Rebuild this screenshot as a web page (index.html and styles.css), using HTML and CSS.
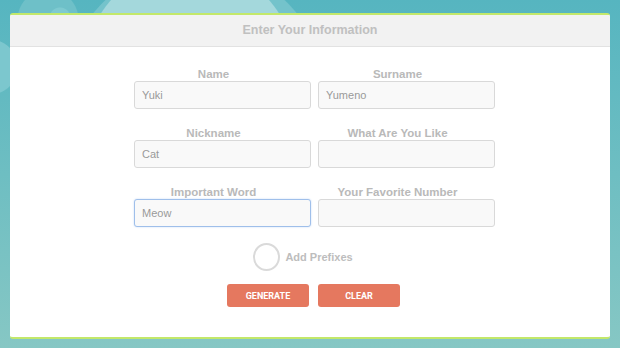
FILE: index.html
```html
<!DOCTYPE html>
<html>
<head>
<meta charset="utf-8">
<link rel="stylesheet" href="styles.css">
</head>
<body>
<div class="card">
  <div class="card-head">Enter Your Information</div>
  <div class="card-body">
    <div class="grid">
      <div class="field"><label class="lbl">Name</label><input class="inp" type="text" value="Yuki"></div>
      <div class="field"><label class="lbl">Surname</label><input class="inp" type="text" value="Yumeno"></div>
      <div class="field"><label class="lbl">Nickname</label><input class="inp" type="text" value="Cat"></div>
      <div class="field"><label class="lbl">What Are You Like</label><input class="inp" type="text" value=""></div>
      <div class="field"><label class="lbl">Important Word</label><input class="inp inp-focus" type="text" value="Meow" autofocus></div>
      <div class="field"><label class="lbl">Your Favorite Number</label><input class="inp" type="text" value=""></div>
    </div>
    <div class="check-row">
      <span class="circle"></span>
      <span class="check-text">Add Prefixes</span>
    </div>
    <div class="btn-row">
      <button class="btn">Generate</button>
      <button class="btn">Clear</button>
    </div>
  </div>
</div>
</body>
</html>
```
FILE: styles.css
```css
html, body {
  margin: 0;
  padding: 0;
}
body {
  width: 620px;
  height: 348px;
  overflow: hidden;
  font-family: "Liberation Sans", Arial, sans-serif;
  background:
    radial-gradient(circle at 190px 70px, #a4d8dc 0 105px, transparent 106px),
    radial-gradient(circle at 120px 95px, #a4d8dc 0 80px, transparent 81px),
    radial-gradient(circle at 195px 95px, #74c3cb 0 130px, transparent 131px),
    radial-gradient(circle at 60px 18px, #7ecad0 0 10px, transparent 11px),
    radial-gradient(circle at 48px 20px, #6ec0c8 0 30px, transparent 31px),
    radial-gradient(circle at -10px 67px, #7cc7ce 0 27px, transparent 28px),
    linear-gradient(#56b5c0, #86c7c4);
  padding-top: 13px;
  box-sizing: border-box;
}
.card {
  margin: 0 10px;
  width: 600px;
  background: #fff;
  border-top: 2px solid #c3e86a;
  border-bottom: 2px solid #c3e86a;
  border-radius: 3px;
  overflow: hidden;
}
.card-head {
  height: 31px;
  line-height: 31px;
  background: #f2f2f2;
  border-bottom: 1px solid #e2e2e2;
  text-align: center;
  font-size: 12.5px;
  font-weight: bold;
  color: #c0c0c0;
}
.card-body {
  padding: 20px 0 30px;
}
.grid {
  display: grid;
  grid-template-columns: 177px 177px;
  column-gap: 7px;
  row-gap: 17px;
  justify-content: center;
  padding-left: 9px;
}
.field {
  display: flex;
  flex-direction: column;
}
.lbl {
  display: block;
  height: 14px;
  line-height: 14px;
  font-size: 11.5px;
  font-weight: bold;
  color: #b9b9b9;
  text-align: center;
  padding-right: 18px;
}
.inp {
  box-sizing: border-box;
  width: 177px;
  height: 28px;
  margin: 0;
  border: 1px solid #d9d9d9;
  border-radius: 3px;
  background: #f9f9f9;
  padding: 0 7px;
  font-family: "Liberation Sans", Arial, sans-serif;
  font-size: 11px;
  color: #999;
  outline: none;
}
.inp-focus, .inp:focus {
  border-color: #9fbfea;
  box-shadow: 0 0 2px #c3d8f5;
}
.check-row {
  display: flex;
  align-items: center;
  justify-content: center;
  gap: 5px;
  margin-top: 16px;
  padding-right: 14px;
}
.circle {
  box-sizing: border-box;
  width: 27px;
  height: 28px;
  border: 2px solid #dadada;
  border-radius: 50%;
  background: #fff;
}
.check-text {
  font-size: 11px;
  font-weight: bold;
  color: #bdbdbd;
}
.btn-row {
  display: flex;
  justify-content: center;
  gap: 9px;
  margin-top: 13px;
  padding-left: 7px;
}
.btn {
  width: 82px;
  height: 23px;
  border: none;
  border-radius: 3px;
  background: #e5785f;
  color: #fff;
  font-family: Roboto, "Liberation Sans", sans-serif;
  font-weight: bold;
  font-size: 9px;
  text-transform: uppercase;
  padding: 0;
}
```
